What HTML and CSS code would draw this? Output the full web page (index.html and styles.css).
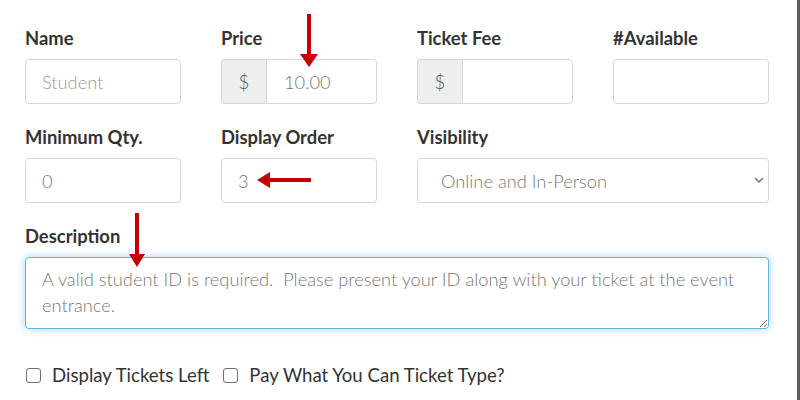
FILE: index.html
```html
<!DOCTYPE html>
<html>
<head>
<meta charset="utf-8">
<link rel="stylesheet" href="styles.css">
</head>
<body>
<div class="page">
  <div class="form">
    <div class="field">
      <label class="lbl">Name</label>
      <input class="ctl" placeholder="Student">
    </div>
    <div class="field">
      <label class="lbl">Price</label>
      <div class="group"><span class="addon">$</span><input class="ctl ctl-grp" value="10.00"></div>
    </div>
    <div class="field">
      <label class="lbl">Ticket Fee</label>
      <div class="group"><span class="addon">$</span><input class="ctl ctl-grp" value=""></div>
    </div>
    <div class="field">
      <label class="lbl">#Available</label>
      <input class="ctl" value="">
    </div>
    <div class="field">
      <label class="lbl">Minimum Qty.</label>
      <input class="ctl" value="0">
    </div>
    <div class="field">
      <label class="lbl">Display Order</label>
      <input class="ctl" value="3">
    </div>
    <div class="field span2">
      <label class="lbl">Visibility</label>
      <div class="selwrap">
        <select class="ctl sel"><option>Online and In-Person</option></select>
        <svg class="chev" width="10" height="7" viewBox="0 0 10 7"><path d="M1.5 1.5 L5 5 L8.5 1.5" fill="none" stroke="#666" stroke-width="1.3" stroke-linecap="round" stroke-linejoin="round"/></svg>
      </div>
    </div>
    <div class="field span4">
      <label class="lbl">Description</label>
      <textarea class="ctl area">A valid student ID is required.  Please present your ID along with your ticket at the event entrance.</textarea>
    </div>
  </div>
  <div class="checks">
    <label class="chk"><input type="checkbox" class="box"><span>Display Tickets Left</span></label>
    <label class="chk"><input type="checkbox" class="box"><span>Pay What You Can Ticket Type?</span></label>
  </div>

  <svg class="arrow a1" width="20" height="56" viewBox="0 0 20 56"><rect x="8" y="0" width="4" height="42" fill="#c40000"/><polygon points="1,40 19,40 10,53" fill="#c40000"/></svg>
  <svg class="arrow a2" width="54" height="18" viewBox="0 0 54 18"><rect x="10" y="7" width="44" height="4" fill="#c40000"/><polygon points="0,9 13,1 13,17" fill="#c40000"/></svg>
  <svg class="arrow a3" width="18" height="56" viewBox="0 0 18 56"><rect x="7" y="0" width="4" height="44" fill="#c40000"/><polygon points="1,41 17,41 9,54" fill="#c40000"/></svg>
</div>
</body>
</html>
```

FILE: styles.css
```css
html, body {
  margin: 0;
  padding: 0;
  background: #fff;
}
.page {
  position: relative;
  width: 800px;
  height: 400px;
  border-right: 3px solid #5a5a5a;
  box-sizing: border-box;
  padding: 27px 0 0 25px;
  font-family: Lato, "Noto Sans", sans-serif;
  overflow: hidden;
}
.form {
  display: grid;
  grid-template-columns: repeat(4, 156px);
  column-gap: 40px;
  row-gap: 22px;
}
.field {
  display: flex;
  flex-direction: column;
}
.span2 { grid-column: span 2; }
.span4 { grid-column: span 4; }
.lbl {
  font-weight: 700;
  font-size: 18.4px;
  line-height: 22px;
  color: #333;
  margin-bottom: 10px;
}
.ctl {
  box-sizing: border-box;
  height: 45px;
  width: 100%;
  border: 1px solid #d6d6d6;
  border-radius: 4px;
  padding: 0 16px;
  font-family: Lato, "Noto Sans", sans-serif;
  font-weight: 300;
  font-size: 18.25px;
  color: #777;
  background: #fff;
  outline: none;
  margin: 0;
}
.ctl::placeholder { color: #999; }
.group {
  display: flex;
  height: 45px;
}
.addon {
  box-sizing: border-box;
  width: 45px;
  flex: none;
  background: #eee;
  border: 1px solid #d6d6d6;
  border-right: none;
  border-radius: 4px 0 0 4px;
  display: flex;
  align-items: center;
  justify-content: center;
  font-weight: 300;
  font-size: 18.6px;
  color: #555;
}
.ctl-grp {
  border-radius: 0 4px 4px 0;
  min-width: 0;
  flex: 1;
  padding-left: 17px;
}
.selwrap {
  position: relative;
}
.sel {
  appearance: none;
  -webkit-appearance: none;
  padding-left: 23px;
}
.chev {
  position: absolute;
  right: 5px;
  top: 19px;
}
.area {
  height: 72px;
  resize: vertical;
  padding: 8px 16px;
  line-height: 26px;
  border-color: #66afe9;
  box-shadow: 0 0 8px rgba(102, 175, 233, 0.55);
}
.checks {
  display: flex;
  gap: 13px;
  margin-top: 35px;
}
.chk {
  display: flex;
  align-items: center;
  gap: 11px;
  font-size: 18.6px;
  line-height: 22px;
  color: #333;
}
.box {
  appearance: none;
  -webkit-appearance: none;
  box-sizing: border-box;
  width: 15px;
  height: 15px;
  margin: 0 0 0 1px;
  border: 1.5px solid #707070;
  border-radius: 3px;
  background: #fff;
}
.arrow {
  position: absolute;
}
.a1 { left: 299px; top: 14px; }
.a2 { left: 257px; top: 171px; }
.a3 { left: 128px; top: 213px; }
```
